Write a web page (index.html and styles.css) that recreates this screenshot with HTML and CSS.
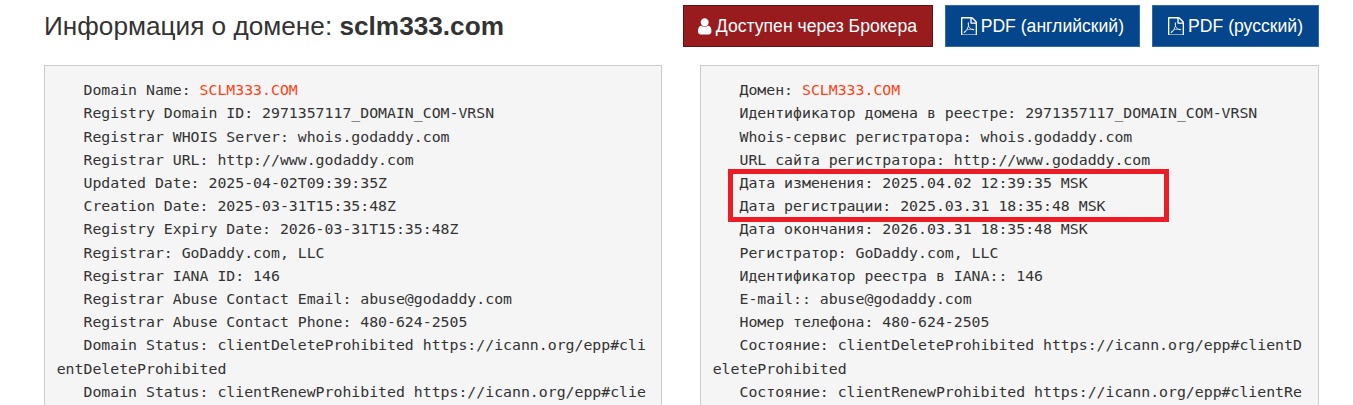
FILE: index.html
```html
<!DOCTYPE html>
<html lang="ru">
<head>
  <meta charset="UTF-8">
  <meta name="viewport" content="width=device-width, initial-scale=1.0">
  <title>Информация о домене: sclm333.com</title>
  <link rel="stylesheet" href="styles.css">
</head>
<body>
  <div class="container">
    <div class="header">
      <h1>Информация о домене: <strong>sclm333.com</strong></h1>
      <div class="buttons">
        <a class="btn btn-broker"><svg class="icon icon-user" viewBox="256 0 1280 1792"><path d="M1536 1399q0 109-62.5 187t-150.5 78h-854q-88 0-150.5-78t-62.5-187q0-85 8.5-160.5t31.5-152 58.5-131 94-89 134.5-34.5q131 128 313 128t313-128q76 0 134.5 34.5t94 89 58.5 131 31.5 152 8.5 160.5zm-256-887q0 159-112.5 271.5t-271.5 112.5-271.5-112.5-112.5-271.5 112.5-271.5 271.5-112.5 271.5 112.5 112.5 271.5z"/></svg><span>Доступен через Брокера</span></a>
        <a class="btn btn-pdf"><svg class="icon" viewBox="128 0 1536 1792"><path id="pdf" d="M1596 380q28 28 48 76t20 88v1152q0 40-28 68t-68 28h-1344q-40 0-68-28t-28-68v-1600q0-40 28-68t68-28h896q40 0 88 20t76 48zm-444-244v376h376q-10-29-22-41l-313-313q-12-12-41-22zm384 1528v-1024h-416q-40 0-68-28t-28-68v-416h-768v1536h1280zm-514-593q33 26 84 56 59-7 117-7 147 0 177 49 16 22 2 52 0 1-1 2l-2 2v1q-6 38-71 38-48 0-115-20t-130-53q-221 24-392 83-153 262-242 262-15 0-28-7l-24-12q-1-1-6-5-10-10-6-36 9-40 56-91.5t132-96.5q14-9 23 6 2 2 2 4 52-85 107-197 68-136 104-262-24-82-30.5-159.5t6.5-127.5q11-40 42-40h22q23 0 35 15 18 21 9 68-2 6-4 8 1 3 1 8v30q-2 123-14 192 55 164 146 238zm-576 411q52-24 137-158-51 40-87.5 84t-49.5 74zm398-920q-15 42-2 132 1-7 7-44 0-3 7-43 1-4 4-8-1-1-1-2-1-2-1-3-1-22-13-36 0 1-1 2v2zm-124 661q135-54 284-81-2-1-13-9.5t-16-13.5q-76-67-127-176-27 86-83 197-30 56-45 83zm646-16q-24-24-140-24 76 28 124 28 14 0 18-1 0-1-2-3z"/></svg><span>PDF (английский)</span></a>
        <a class="btn btn-pdf"><svg class="icon" viewBox="128 0 1536 1792"><use href="#pdf"/></svg><span>PDF (русский)</span></a>
      </div>
    </div>

    <div class="columns">
      <pre class="whois">   Domain Name: <span class="domain">SCLM333.COM</span>
   Registry Domain ID: 2971357117_DOMAIN_COM-VRSN
   Registrar WHOIS Server: whois.godaddy.com
   Registrar URL: http://www.godaddy.com
   Updated Date: 2025-04-02T09:39:35Z
   Creation Date: 2025-03-31T15:35:48Z
   Registry Expiry Date: 2026-03-31T15:35:48Z
   Registrar: GoDaddy.com, LLC
   Registrar IANA ID: 146
   Registrar Abuse Contact Email: abuse@godaddy.com
   Registrar Abuse Contact Phone: 480-624-2505
   Domain Status: clientDeleteProhibited https://icann.org/epp#clientDeleteProhibited
   Domain Status: clientRenewProhibited https://icann.org/epp#clie</pre>
      <div class="column">
        <pre class="whois">   Домен: <span class="domain">SCLM333.COM</span>
   Идентификатор домена в реестре: 2971357117_DOMAIN_COM-VRSN
   Whois-сервис регистратора: whois.godaddy.com
   URL сайта регистратора: http://www.godaddy.com
   Дата изменения: 2025.04.02 12:39:35 MSK
   Дата регистрации: 2025.03.31 18:35:48 MSK
   Дата окончания: 2026.03.31 18:35:48 MSK
   Регистратор: GoDaddy.com, LLC
   Идентификатор реестра в IANA:: 146
   E-mail:: abuse@godaddy.com
   Номер телефона: 480-624-2505
   Состояние: clientDeleteProhibited https://icann.org/epp#clientDeleteProhibited
   Состояние: clientRenewProhibited https://icann.org/epp#clientRe</pre>
        <div class="highlight"></div>
      </div>
    </div>
  </div>
</body>
</html>
```
FILE: styles.css
```css
* {
  box-sizing: border-box;
}
body {
  margin: 0;
  background-color: #fff;
  color: #333;
  font-family: "Liberation Sans", Arial, sans-serif;
}
.container {
  padding: 5px 34px 0 44px;
}
.header {
  display: flex;
  justify-content: space-between;
  height: 60px;
}
h1 {
  margin: 0;
  font-size: 26.2px;
  font-weight: normal;
  line-height: 42px;
  white-space: nowrap;
}
.buttons {
  display: flex;
  gap: 12px;
}
.btn {
  display: flex;
  align-items: center;
  gap: 4px;
  height: 42px;
  padding: 0 15px;
  border: 1px solid #2e6da4;
  color: #fff;
  font-size: 17.6px;
  white-space: nowrap;
}
.btn-broker {
  padding: 0 14.7px;
  background-color: #981c1e;
  border-color: #5f1213;
}
.btn-pdf {
  background-color: #05458c;
}
.icon {
  width: 16px;
  height: 18.75px;
  fill: currentColor;
}
.icon-user {
  width: 13.4px;
}
.columns {
  display: grid;
  grid-template-columns: 618px 619px;
  justify-content: space-between;
}
.column {
  position: relative;
}
.whois {
  margin: 0;
  height: 340px;
  padding: 12.15px 12px 0 11.7px;
  border: 1px solid #ccc;
  border-bottom: 0;
  background-color: #f5f5f5;
  font-family: "DejaVu Sans Mono", monospace;
  font-size: 14.83px;
  line-height: 23.21px;
  white-space: pre-wrap;
  word-break: break-all;
  overflow: hidden;
}
.domain {
  color: #ff4216;
}
/* frame around the changed and registered dates */
.highlight {
  position: absolute;
  top: 104px;
  left: 28px;
  width: 441px;
  height: 53px;
  border: 5px solid #ed1c24;
}
```
